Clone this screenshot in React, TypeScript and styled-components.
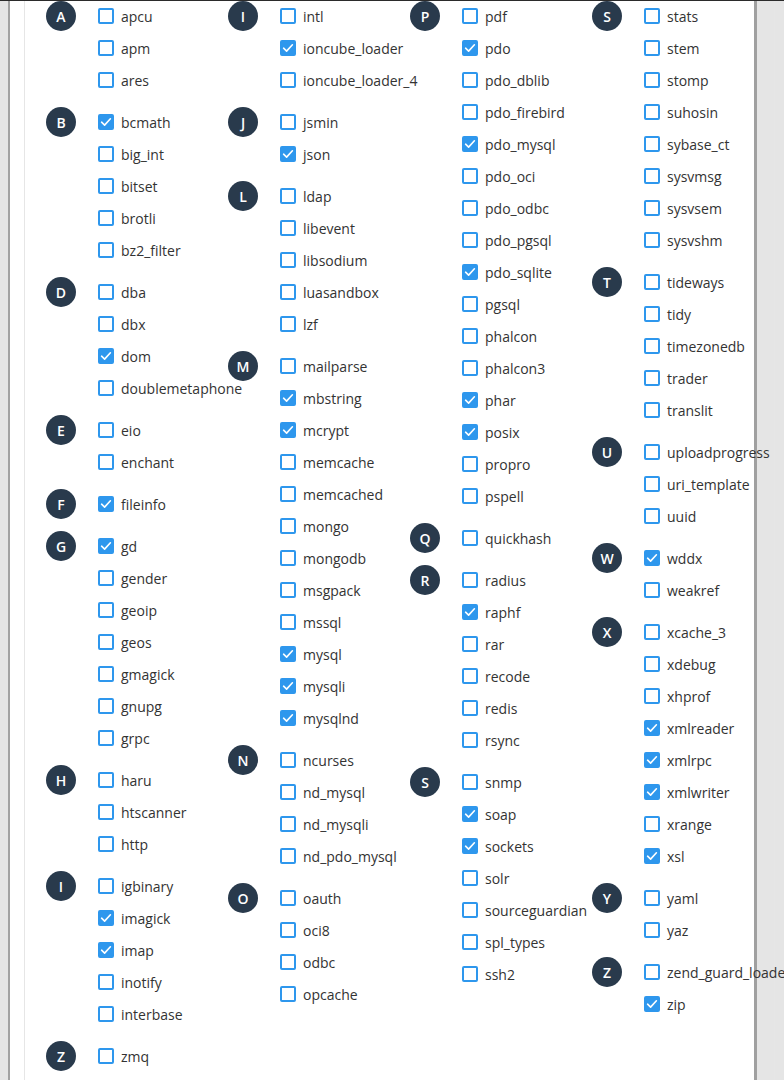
import React from "react"
import styled, { createGlobalStyle } from "styled-components"

type Ext = { name: string; on?: boolean }
type Group = { letter: string; items: Ext[] }

const e = (list: string): Ext[] =>
	list.split(" ").map((n) => (n.startsWith("*") ? { name: n.slice(1), on: true } : { name: n }))

const columns: Group[][] = [
	[
		{ letter: "A", items: e("apcu apm ares") },
		{ letter: "B", items: e("*bcmath big_int bitset brotli bz2_filter") },
		{ letter: "D", items: e("dba dbx *dom doublemetaphone") },
		{ letter: "E", items: e("eio enchant") },
		{ letter: "F", items: e("*fileinfo") },
		{ letter: "G", items: e("*gd gender geoip geos gmagick gnupg grpc") },
		{ letter: "H", items: e("haru htscanner http") },
		{ letter: "I", items: e("igbinary *imagick *imap inotify interbase") },
		{ letter: "Z", items: e("zmq") },
	],
	[
		{ letter: "I", items: e("intl *ioncube_loader ioncube_loader_4") },
		{ letter: "J", items: e("jsmin *json") },
		{ letter: "L", items: e("ldap libevent libsodium luasandbox lzf") },
		{
			letter: "M",
			items: e(
				"mailparse *mbstring *mcrypt memcache memcached mongo mongodb msgpack mssql *mysql *mysqli *mysqlnd",
			),
		},
		{ letter: "N", items: e("ncurses nd_mysql nd_mysqli nd_pdo_mysql") },
		{ letter: "O", items: e("oauth oci8 odbc opcache") },
	],
	[
		{
			letter: "P",
			items: e(
				"pdf *pdo pdo_dblib pdo_firebird *pdo_mysql pdo_oci pdo_odbc pdo_pgsql *pdo_sqlite pgsql phalcon phalcon3 *phar *posix propro pspell",
			),
		},
		{ letter: "Q", items: e("quickhash") },
		{ letter: "R", items: e("radius *raphf rar recode redis rsync") },
		{ letter: "S", items: e("snmp *soap *sockets solr sourceguardian spl_types ssh2") },
	],
	[
		{ letter: "S", items: e("stats stem stomp suhosin sybase_ct sysvmsg sysvsem sysvshm") },
		{ letter: "T", items: e("tideways tidy timezonedb trader translit") },
		{ letter: "U", items: e("uploadprogress uri_template uuid") },
		{ letter: "W", items: e("*wddx weakref") },
		{ letter: "X", items: e("xcache_3 xdebug xhprof *xmlreader *xmlrpc *xmlwriter xrange *xsl") },
		{ letter: "Y", items: e("yaml yaz") },
		{ letter: "Z", items: e("zend_guard_loader *zip") },
	],
]

export default function App() {
	return (
		<>
			<GlobalStyle />
			<TopLine />
			<Panel>
				<Inner>
					<Grid>
						{columns.map((groups, ci) => (
							<Column key={ci}>
								{groups.map((g) => (
									<LetterGroup key={g.letter + ci}>
										<Badge>{g.letter}</Badge>
										<List>
											{g.items.map((it) => (
												<Row key={it.name}>
													<Box $on={!!it.on}>
														{it.on && (
															<svg width="12" height="12" viewBox="0 0 12 12">
																<path
																	d="M1.6 6.2 L4.6 9.1 L10.4 2.8"
																	fill="none"
																	stroke="#fff"
																	strokeWidth="1.6"
																	strokeLinecap="round"
																	strokeLinejoin="round"
																/>
															</svg>
														)}
													</Box>
													<Label>{it.name}</Label>
												</Row>
											))}
										</List>
									</LetterGroup>
								))}
							</Column>
						))}
					</Grid>
				</Inner>
			</Panel>
		</>
	)
}

const GlobalStyle = createGlobalStyle`
	html, body {
		margin: 0;
		padding: 0;
		overflow: hidden;
		background: #e5e5e5;
		font-family: "Open Sans", "Liberation Sans", sans-serif;
	}
`

const TopLine = styled.div`
	position: fixed;
	top: 0;
	left: 0;
	right: 0;
	height: 1px;
	background: #2b2b2b;
	z-index: 2;
`

const Panel = styled.div`
	margin-left: 8px;
	width: 749px;
	min-height: 1080px;
	box-sizing: border-box;
	background: #fff;
	border-left: 2px solid #a2a2a2;
	border-right: 3px solid #a0a0a0;
	padding: 0 15px 0 14px;
	display: flex;
`

const Inner = styled.div`
	flex: 1;
	border-left: 1px solid #e6e6e6;
	border-right: 1px solid #e6e6e6;
`

const Grid = styled.div`
	display: grid;
	grid-template-columns: repeat(4, 182px);
	padding-left: 21px;
`

const Column = styled.div`
	display: flex;
	flex-direction: column;
	gap: 10px;
`

const LetterGroup = styled.div`
	display: flex;
	align-items: flex-start;
	gap: 22px;
`

const Badge = styled.div`
	width: 30px;
	height: 30px;
	margin-top: 1px;
	flex: none;
	border-radius: 50%;
	background: #293a4c;
	color: #fff;
	font-size: 14px;
	font-weight: 600;
	display: grid;
	place-items: center;
`

const List = styled.div`
	display: flex;
	flex-direction: column;
`

const Row = styled.div`
	height: 32px;
	display: flex;
	align-items: center;
	gap: 7px;
	white-space: nowrap;
`

const Box = styled.span<{ $on: boolean }>`
	width: 16px;
	height: 16px;
	box-sizing: border-box;
	border: 2px solid #2e97ed;
	border-radius: 2px;
	background: ${({ $on }) => ($on ? "#2e97ed" : "#fff")};
	display: grid;
	place-items: center;
	flex: none;
`

const Label = styled.span`
	font-size: 14px;
	color: #333;
`
